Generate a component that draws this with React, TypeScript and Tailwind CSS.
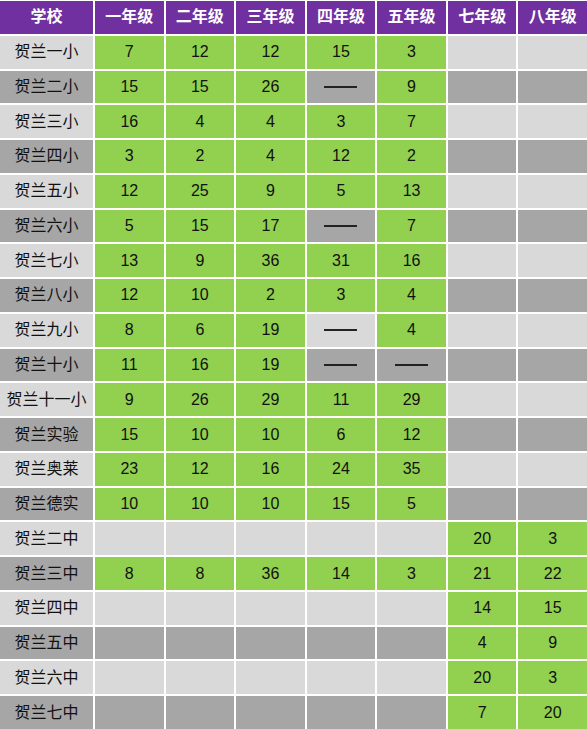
const grades = ["一年级", "二年级", "三年级", "四年级", "五年级", "七年级", "八年级"];

type Cell = number | "-" | null;

const rows: { name: string; cells: Cell[] }[] = [
  { name: "贺兰一小", cells: [7, 12, 12, 15, 3, null, null] },
  { name: "贺兰二小", cells: [15, 15, 26, "-", 9, null, null] },
  { name: "贺兰三小", cells: [16, 4, 4, 3, 7, null, null] },
  { name: "贺兰四小", cells: [3, 2, 4, 12, 2, null, null] },
  { name: "贺兰五小", cells: [12, 25, 9, 5, 13, null, null] },
  { name: "贺兰六小", cells: [5, 15, 17, "-", 7, null, null] },
  { name: "贺兰七小", cells: [13, 9, 36, 31, 16, null, null] },
  { name: "贺兰八小", cells: [12, 10, 2, 3, 4, null, null] },
  { name: "贺兰九小", cells: [8, 6, 19, "-", 4, null, null] },
  { name: "贺兰十小", cells: [11, 16, 19, "-", "-", null, null] },
  { name: "贺兰十一小", cells: [9, 26, 29, 11, 29, null, null] },
  { name: "贺兰实验", cells: [15, 10, 10, 6, 12, null, null] },
  { name: "贺兰奥莱", cells: [23, 12, 16, 24, 35, null, null] },
  { name: "贺兰德实", cells: [10, 10, 10, 15, 5, null, null] },
  { name: "贺兰二中", cells: [null, null, null, null, null, 20, 3] },
  { name: "贺兰三中", cells: [8, 8, 36, 14, 3, 21, 22] },
  { name: "贺兰四中", cells: [null, null, null, null, null, 14, 15] },
  { name: "贺兰五中", cells: [null, null, null, null, null, 4, 9] },
  { name: "贺兰六中", cells: [null, null, null, null, null, 20, 3] },
  { name: "贺兰七中", cells: [null, null, null, null, null, 7, 20] },
];

const font = { fontFamily: '"Liberation Sans", "Noto Sans CJK SC", sans-serif' };

export default function App() {
  return (
    <div className="w-[587px] h-[729px] bg-white pt-px" style={font}>
      <div className="grid h-full grid-cols-[93px_repeat(7,1fr)] grid-rows-[repeat(21,1fr)] gap-[2px] text-[16px] text-[#111]">
        <div className="flex items-center justify-center bg-[#7030a0] text-[16px] font-bold text-white">学校</div>
        {grades.map((g) => (
          <div key={g} className="flex items-center justify-center bg-[#7030a0] text-[16px] font-bold text-white">
            {g}
          </div>
        ))}
        {rows.map((r, i) => {
          const gray = i % 2 === 0 ? "bg-[#d9d9d9]" : "bg-[#a6a6a6]";
          return [
            <div key={r.name} className={`flex items-center justify-center ${gray}`}>
              {r.name}
            </div>,
            ...r.cells.map((c, j) => {
              if (c === null) return <div key={r.name + j} className={gray} />;
              if (c === "-")
                return (
                  <div key={r.name + j} className={`flex items-center justify-center ${gray}`}>
                    <div className="h-[1.5px] w-[33px] bg-[#222]" />
                  </div>
                );
              return (
                <div key={r.name + j} className="flex items-center justify-center bg-[#92d050]">
                  {c}
                </div>
              );
            }),
          ];
        })}
      </div>
    </div>
  );
}
